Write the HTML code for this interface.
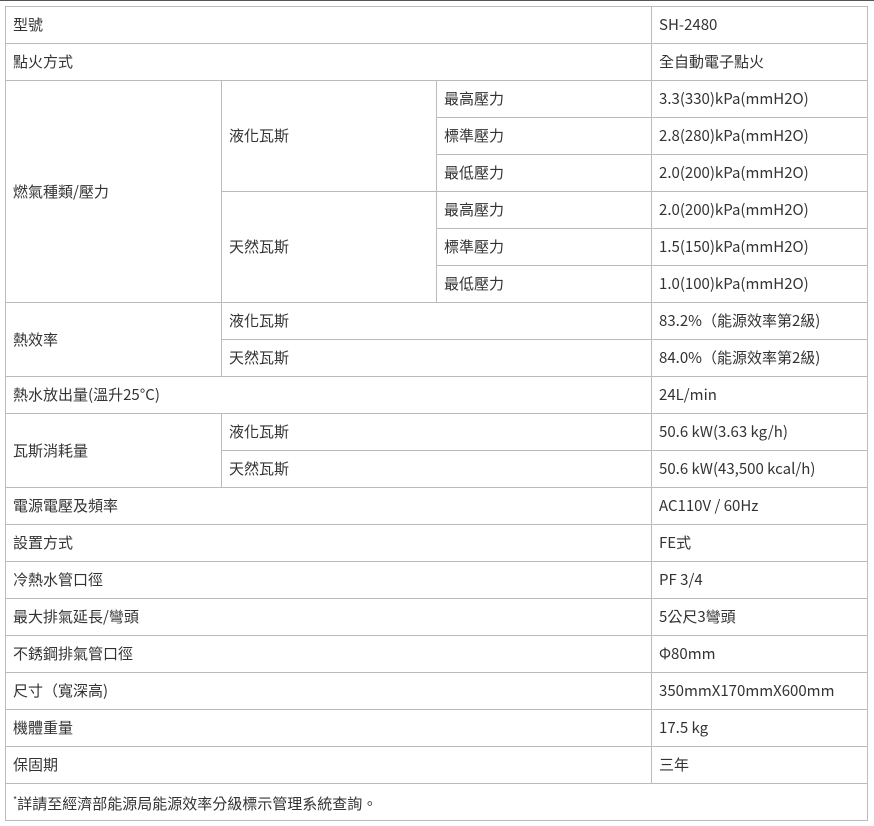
<!DOCTYPE html><html><head><meta charset="utf-8"><style>
body{margin:0;width:874px;height:826px;background:#fff;border-top:1px solid #555;box-sizing:border-box;overflow:hidden}
table{position:absolute;left:5px;top:6px;border-collapse:collapse;table-layout:fixed;font-family:"Noto Sans CJK TC","Liberation Sans",sans-serif;font-size:15px;color:#333}
td{border:1px solid #bbb;height:37px;padding:0 0 0 7px;box-sizing:border-box;vertical-align:middle;white-space:nowrap;line-height:20px}
</style></head><body>
<table>
<colgroup><col style="width:216px"><col style="width:215px"><col style="width:215px"><col style="width:216px"></colgroup>
<tr><td colspan="3">型號</td><td>SH-2480</td></tr>
<tr><td colspan="3">點火方式</td><td>全自動電子點火</td></tr>
<tr><td rowspan="6">燃氣種類/壓力</td><td rowspan="3">液化瓦斯</td><td>最高壓力</td><td>3.3(330)kPa(mmH2O)</td></tr>
<tr><td>標準壓力</td><td>2.8(280)kPa(mmH2O)</td></tr>
<tr><td>最低壓力</td><td>2.0(200)kPa(mmH2O)</td></tr>
<tr><td rowspan="3">天然瓦斯</td><td>最高壓力</td><td>2.0(200)kPa(mmH2O)</td></tr>
<tr><td>標準壓力</td><td>1.5(150)kPa(mmH2O)</td></tr>
<tr><td>最低壓力</td><td>1.0(100)kPa(mmH2O)</td></tr>
<tr><td rowspan="2">熱效率</td><td colspan="2">液化瓦斯</td><td>83.2%（能源效率第2級)</td></tr>
<tr><td colspan="2">天然瓦斯</td><td>84.0%（能源效率第2級)</td></tr>
<tr><td colspan="3">熱水放出量(溫升25°C)</td><td>24L/min</td></tr>
<tr><td rowspan="2">瓦斯消耗量</td><td colspan="2">液化瓦斯</td><td>50.6 kW(3.63 kg/h)</td></tr>
<tr><td colspan="2">天然瓦斯</td><td>50.6 kW(43,500 kcal/h)</td></tr>
<tr><td colspan="3">電源電壓及頻率</td><td>AC110V / 60Hz</td></tr>
<tr><td colspan="3">設置方式</td><td>FE式</td></tr>
<tr><td colspan="3">冷熱水管口徑</td><td>PF 3/4</td></tr>
<tr><td colspan="3">最大排氣延長/彎頭</td><td>5公尺3彎頭</td></tr>
<tr><td colspan="3">不銹鋼排氣管口徑</td><td>Φ80mm</td></tr>
<tr><td colspan="3">尺寸（寬深高)</td><td>350mmX170mmX600mm</td></tr>
<tr><td colspan="3">機體重量</td><td>17.5 kg</td></tr>
<tr><td colspan="3">保固期</td><td>三年</td></tr>
<tr><td colspan="4"><sup style="font-size:9px">*</sup>詳請至經濟部能源局能源效率分級標示管理系統查詢。</td></tr>
</table>
</body></html>
